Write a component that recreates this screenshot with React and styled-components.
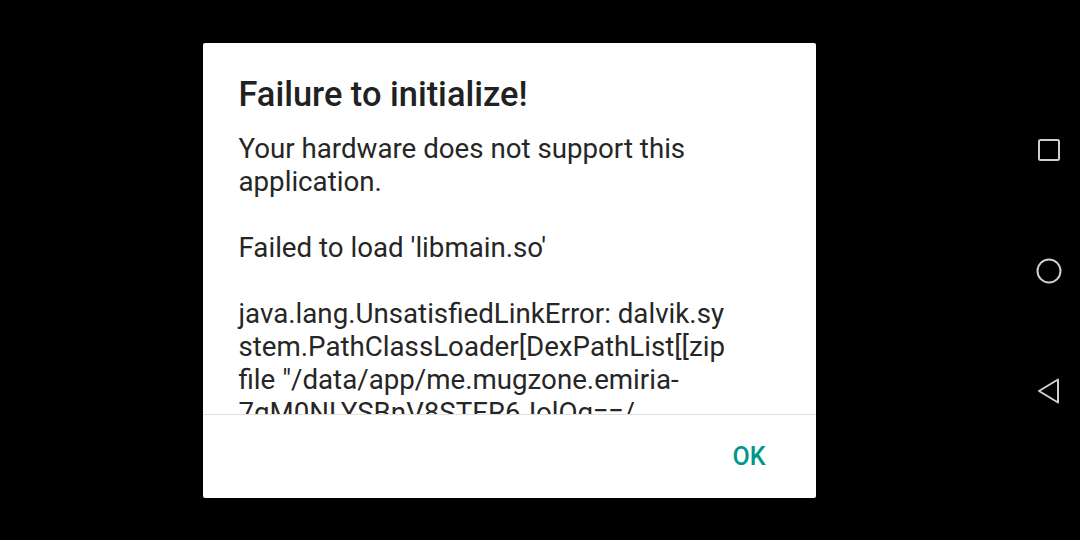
import React from 'react';
import styled, { createGlobalStyle } from 'styled-components';

const GlobalStyle = createGlobalStyle`
  html, body {
    margin: 0;
    padding: 0;
    background: #000;
    font-family: Roboto, "Noto Sans", sans-serif;
  }
`;

const Screen = styled.div`
  width: 1080px;
  height: 540px;
  display: flex;
  flex-direction: row;
  background: #000;
  overflow: hidden;
`;

const Main = styled.div`
  flex: 1;
  display: flex;
  align-items: center;
  justify-content: center;
`;

const NavBar = styled.div`
  width: 62px;
  display: flex;
  flex-direction: column;
  align-items: center;
  justify-content: space-between;
  padding: 137px 0 136px;
  box-sizing: border-box;
`;

const NavButton = styled.div`
  width: 26px;
  height: 26px;
  display: flex;
  align-items: center;
  justify-content: center;
  color: #cfcfcf;
`;

const Dialog = styled.div`
  width: 613px;
  height: 455px;
  background: #fff;
  border-radius: 2px;
  display: flex;
  flex-direction: column;
  overflow: hidden;
`;

const Title = styled.h1`
  margin: 0;
  padding: 32px 36px 0;
  font-size: 34.4px;
  line-height: 38px;
  font-weight: 500;
  color: #212121;
`;

const Message = styled.div`
  flex: 1;
  overflow: hidden;
  padding: 19px 60px 0 36px;
  font-size: 27.7px;
  line-height: 33px;
  color: #262626;
  border-bottom: 1px solid #e0e0e0;
`;

const Paragraph = styled.p`
  margin: 0 0 33px;
  white-space: ${props => (props.nowrap ? 'nowrap' : 'normal')};
`;

const Actions = styled.div`
  height: 83px;
  display: flex;
  align-items: center;
  justify-content: flex-end;
  padding: 0 50px 0 0;
`;

const TextButton = styled.button`
  border: none;
  background: none;
  padding: 0;
  font-family: Roboto, sans-serif;
  font-weight: 500;
  font-size: 25px;
  color: #009688;
  text-transform: uppercase;
  cursor: pointer;
`;

const App = () => (
  <>
    <GlobalStyle />
    <Screen>
      <Main>
        <Dialog>
          <Title>Failure to initialize!</Title>
          <Message>
            <Paragraph>Your hardware does not support this application.</Paragraph>
            <Paragraph>Failed to load 'libmain.so'</Paragraph>
            <Paragraph nowrap>
              java.lang.UnsatisfiedLinkError: dalvik.sy<br />
              stem.PathClassLoader[DexPathList[[zip<br />
              file "/data/app/me.mugzone.emiria-<br />
              7gM0NLYSBnV8STER6JolOg==/
            </Paragraph>
          </Message>
          <Actions>
            <TextButton>OK</TextButton>
          </Actions>
        </Dialog>
      </Main>
      <NavBar>
        <NavButton>
          <svg width="24" height="24" viewBox="0 0 24 24">
            <rect x="2" y="2" width="20" height="20" rx="1.5" fill="none" stroke="currentColor" strokeWidth="2" />
          </svg>
        </NavButton>
        <NavButton>
          <svg width="26" height="26" viewBox="0 0 26 26">
            <circle cx="13" cy="13" r="11.5" fill="none" stroke="currentColor" strokeWidth="2" />
          </svg>
        </NavButton>
        <NavButton>
          <svg width="26" height="26" viewBox="0 0 26 26">
            <path d="M22 1.5 L3 13 L22 24.5 Z" fill="none" stroke="currentColor" strokeWidth="2" strokeLinejoin="round" />
          </svg>
        </NavButton>
      </NavBar>
    </Screen>
  </>
);

export default App;
